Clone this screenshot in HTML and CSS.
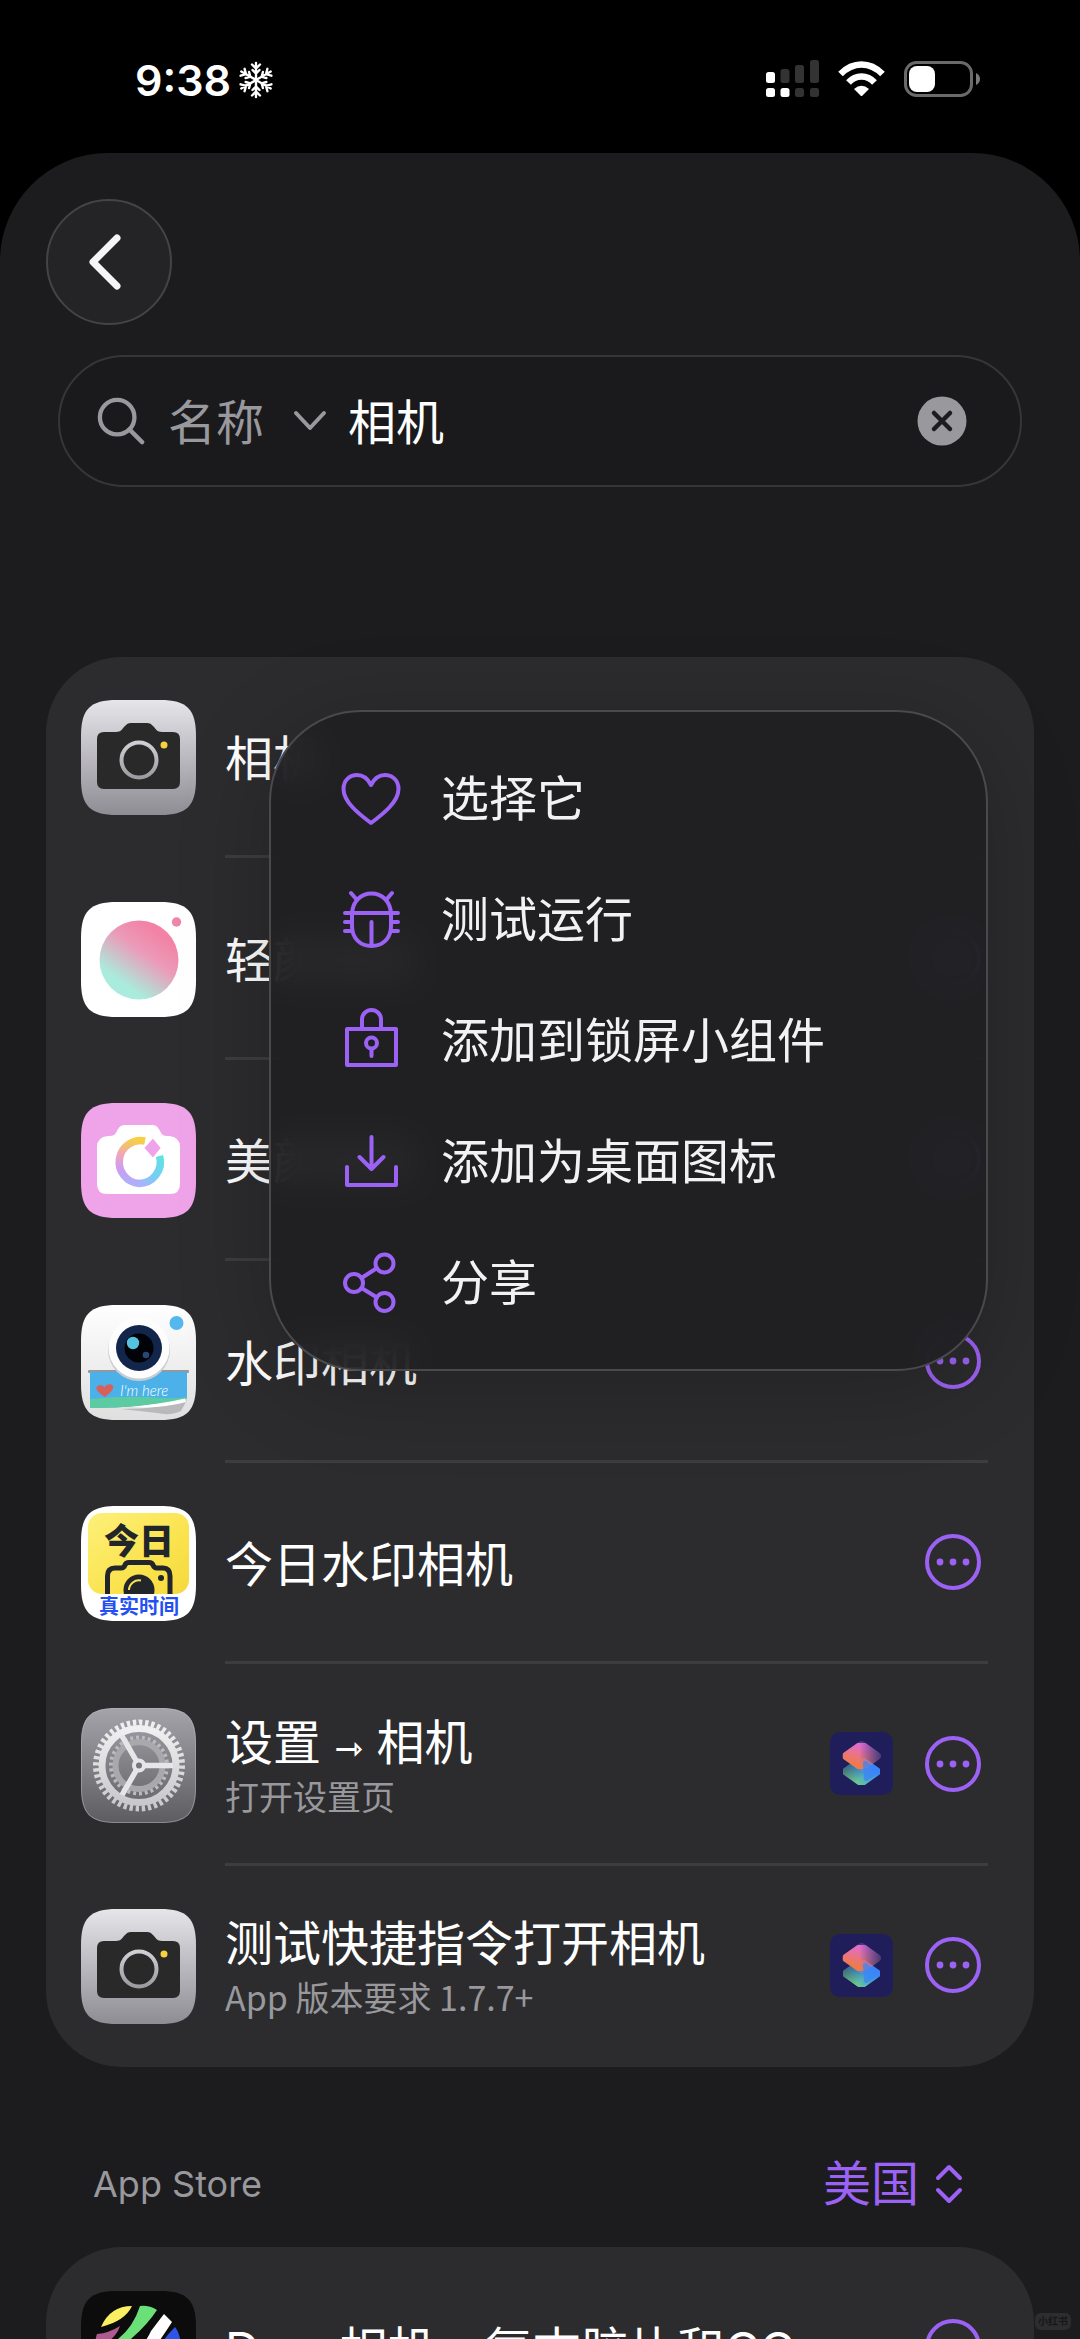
FILE: index.html
```html
<!DOCTYPE html>
<html lang="zh-CN">
<head>
<meta charset="utf-8">
<meta name="viewport" content="width=device-width, initial-scale=1">
<title>相机</title>
<link rel="stylesheet" href="styles.css">
</head>
<body>
<svg class="defs" aria-hidden="true">
  <defs>
    <linearGradient id="g-silver" x1="0" y1="0" x2="0" y2="1"><stop offset="0" stop-color="#e6e5ea"/><stop offset="1" stop-color="#8f8d94"/></linearGradient>
    <linearGradient id="g-ring" x1="0" y1="0" x2="0" y2="1"><stop offset="0" stop-color="#d0cfd3"/><stop offset="1" stop-color="#9c9ba0"/></linearGradient>
    <linearGradient id="g-pink" x1=".8" y1=".08" x2=".2" y2=".92"><stop offset=".1" stop-color="#f283a6"/><stop offset=".4" stop-color="#eb9bb8"/><stop offset=".85" stop-color="#a9ecdd"/></linearGradient>
    <linearGradient id="g-arc-left" x1=".7" y1="0" x2=".6" y2="1"><stop offset="0" stop-color="#f6cf45"/><stop offset=".4" stop-color="#efa5bd"/><stop offset=".7" stop-color="#cf9cf0"/><stop offset="1" stop-color="#aeb0fa"/></linearGradient>
    <linearGradient id="g-arc-right" x1="1" y1="0" x2="0" y2="1"><stop offset="0" stop-color="#5fe2e4"/><stop offset=".5" stop-color="#78cdf6"/><stop offset="1" stop-color="#aeb0fa"/></linearGradient>
    <linearGradient id="g-white" x1="0" y1="0" x2="0" y2="1"><stop offset="0" stop-color="#fff"/><stop offset="1" stop-color="#dfdfe0"/></linearGradient>
    <linearGradient id="g-yellow" x1="0" y1="0" x2="1" y2="1"><stop offset="0" stop-color="#fdf07a"/><stop offset=".6" stop-color="#fbe34e"/><stop offset="1" stop-color="#f5d83c"/></linearGradient>
    <linearGradient id="g-gray" x1="0" y1="0" x2="0" y2="1"><stop offset="0" stop-color="#a5a4aa"/><stop offset="1" stop-color="#5d5c61"/></linearGradient>
    <linearGradient id="g-gear" x1="0" y1="0" x2="0" y2="1"><stop offset="0" stop-color="#f0f0f2"/><stop offset="1" stop-color="#c9c8cc"/></linearGradient>
    <linearGradient id="g-warm" x1=".6" y1="0" x2=".2" y2=".9"><stop offset="0" stop-color="#e06cd6"/><stop offset=".9" stop-color="#f07a4e"/></linearGradient>
    <linearGradient id="g-warm-fade" x1="0" y1="0" x2="1" y2="0"><stop offset=".45" stop-color="#fff"/><stop offset=".95" stop-color="#000"/></linearGradient>
    <linearGradient id="g-cool" x1="1" y1=".4" x2=".3" y2="1"><stop offset="0" stop-color="#3a84fb"/><stop offset=".5" stop-color="#4aa3cf"/><stop offset="1" stop-color="#6ccb8d"/></linearGradient>
    <linearGradient id="g-cool-fade" x1="0" y1="0" x2=".6" y2=".5"><stop offset="0" stop-color="#222"/><stop offset="1" stop-color="#fff"/></linearGradient>
    <mask id="m-warm"><rect x="10" y="4" width="43" height="40" fill="url(#g-warm-fade)"/></mask>
    <mask id="m-cool"><rect x="10" y="20" width="43" height="40" fill="url(#g-cool-fade)"/></mask>
    <clipPath id="c-app"><path d="M0 36C0 9 9 0 36 0H79C106 0 115 9 115 36V79C115 106 106 115 79 115H36C9 115 0 106 0 79Z"/></clipPath>
    <clipPath id="c-today"><rect x="7" y="7" width="101" height="81" rx="14"/></clipPath>
  </defs>

  <symbol id="app-camera" viewBox="0 0 115 115">
    <g clip-path="url(#c-app)">
      <rect width="115" height="115" fill="url(#g-silver)"/>
      <path fill="#29292a" d="M23 32H35C40 32 41 29 44 26C46 24 47 23 50 23H66C69 23 70 24 72 26C75 29 76 32 81 32H92Q99 32 99 39V82Q99 89 92 89H23Q16 89 16 82V39Q16 32 23 32Z"/>
      <circle cx="58" cy="60" r="17.5" fill="none" stroke="url(#g-ring)" stroke-width="4"/>
      <circle cx="83" cy="45" r="3.5" fill="#f6d23e"/>
    </g>
  </symbol>
  <symbol id="shortcut" viewBox="0 0 63 63">
    <rect width="63" height="63" rx="10" fill="#1f1d5a"/>
    <g stroke-linejoin="round">
      <g mask="url(#m-cool)"><path d="M31.500 28.500L47 39.500L31.500 50.500L16 39.500Z" fill="url(#g-cool)" stroke="url(#g-cool)" stroke-width="8"/></g>
      <path d="M31.500 13L47 24L31.500 35L16 24Z" fill="#b08ac0" stroke="#b08ac0" stroke-width="8" opacity=".28"/>
      <g mask="url(#m-warm)"><path d="M31.500 13L47 24L31.500 35L16 24Z" fill="url(#g-warm)" stroke="url(#g-warm)" stroke-width="8"/></g>
      <path d="M35 31L47 39.500L36 47Z" fill="#3a84fb" stroke="#3a84fb" stroke-width="4" opacity=".7"/>
    </g>
  </symbol>
  <symbol id="more" viewBox="0 0 56 56">
    <circle cx="28" cy="28" r="26" fill="none" stroke="currentColor" stroke-width="4"/>
    <g fill="currentColor"><circle cx="15" cy="28" r="3.400"/><circle cx="28" cy="28" r="3.400"/><circle cx="41" cy="28" r="3.400"/></g>
  </symbol>
</svg>

<header class="status">
  <div class="clock">
    <span>9:38</span>
    <svg width="34" height="38" viewBox="0 0 34 38" fill="none" stroke="#fff" stroke-width="2.400" stroke-linecap="round">
      <g id="arm"><path d="M17 19V2M13 3.500L17 7.500L21 3.500M13.500 9L17 12.500L20.500 9"/></g>
      <use href="#arm" transform="rotate(60 17 19)"/><use href="#arm" transform="rotate(120 17 19)"/><use href="#arm" transform="rotate(180 17 19)"/><use href="#arm" transform="rotate(240 17 19)"/><use href="#arm" transform="rotate(300 17 19)"/>
    </svg>
  </div>
  <div class="indicators">
    <svg width="53" height="37" viewBox="0 0 53 37" fill="#333">
      <rect x="0" y="12" width="9" height="11" rx="2.500" fill="#fff"/><rect x="14.500" y="9" width="9" height="14" rx="2.500"/><rect x="29" y="5" width="9" height="18" rx="2.500"/><rect x="44" y="0" width="9" height="23" rx="2.500"/>
      <rect x="0" y="28" width="9" height="9" rx="2.500" fill="#fff"/><rect x="14.500" y="28" width="9" height="9" rx="2.500" fill="#fff"/><rect x="29" y="28" width="9" height="9" rx="2.500"/><rect x="44" y="28" width="9" height="9" rx="2.500"/>
    </svg>
    <svg width="47" height="35" viewBox="0 0 47 35" fill="none" stroke="#fff" stroke-width="6.500">
      <path d="M2.500 13Q12 3.500 23.500 3.500Q35 3.500 44.500 13"/>
      <path d="M10.500 21.500Q16 15.500 23.500 15.500Q31 15.500 36.500 21.500"/>
      <path fill="#fff" stroke="none" d="M16 28Q23.500 21.500 31 28L23.500 35.500Z"/>
    </svg>
    <svg width="76" height="36" viewBox="0 0 76 36">
      <rect x="1.500" y="1.500" width="66" height="33" rx="11" fill="none" stroke="#6a6a6c" stroke-width="3"/>
      <rect x="5" y="5" width="26" height="26" rx="8" fill="#fff"/>
      <path d="M72 12Q76 14 76 18Q76 22 72 24Z" fill="#7a7a7c"/>
    </svg>
  </div>
</header>

<main class="sheet">
  <button class="back" type="button" aria-label="返回">
    <svg width="34" height="56" viewBox="0 0 34 56" fill="none" stroke="#f5f5f7" stroke-width="7" stroke-linecap="round" stroke-linejoin="round"><path d="M29 4L5 28L29 52"/></svg>
  </button>

  <form class="search">
    <svg width="48" height="48" viewBox="0 0 50 50" fill="none" stroke="currentColor" stroke-width="4.500" stroke-linecap="round"><circle cx="21" cy="21" r="18"/><path d="M34 34L47 47"/></svg>
    <label class="field">
      <select aria-label="搜索方式"><option>名称</option></select>
      <svg width="34" height="22" viewBox="0 0 34 22" fill="none" stroke="currentColor" stroke-width="4" stroke-linecap="round" stroke-linejoin="round"><path d="M3 3L17 18L31 3"/></svg>
    </label>
    <input type="text" value="相机" aria-label="搜索">
    <button class="clear" type="button" aria-label="清除">
      <svg width="50" height="50" viewBox="0 0 50 50"><circle cx="25" cy="25" r="24.500" fill="#98989d"/><path d="M17 17L33 33M33 17L17 33" stroke="#1c1c1e" stroke-width="4.500" stroke-linecap="round"/></svg>
    </button>
  </form>

  <section class="results">
    <ul class="card">
      <li class="row">
        <svg class="app"><use href="#app-camera"/></svg>
        <div class="line"><div class="names"><span class="title">相机</span></div></div>
      </li>
      <li class="row">
        <svg class="app" viewBox="0 0 115 115">
          <g clip-path="url(#c-app)">
            <rect width="115" height="115" fill="#fff"/>
            <circle cx="58" cy="58" r="39.5" fill="url(#g-pink)"/>
            <circle cx="95.500" cy="20" r="4.700" fill="#ef86a9"/>
          </g>
        </svg>
        <div class="line"><div class="names"><span class="title">轻颜相机</span></div>
          <button class="more" type="button" aria-label="更多"><svg><use href="#more"/></svg></button></div>
      </li>
      <li class="row">
        <svg class="app" viewBox="0 0 115 115">
          <g clip-path="url(#c-app)">
            <rect width="115" height="115" fill="#efa3e8"/>
            <path fill="#fff" d="M27 33C33 33 34 32 36 28C38 24 40 22 44 22H71C75 22 77 24 79 28C81 32 82 33 88 33Q99 34 99 44V81Q99 91 89 91H26Q16 91 16 81V44Q16 34 27 33Z"/>
            <path fill="none" stroke="url(#g-arc-left)" stroke-width="7.500" d="M64 38A21.500 21.500 0 1 0 58 80.500"/>
            <path fill="none" stroke="url(#g-arc-right)" stroke-width="7.500" d="M57.500 80.500A21.500 21.500 0 0 0 78.500 53"/>
            <path fill="#efa3e8" stroke="#fff" stroke-width="2" d="M72 34L81 45L72 56L62 45Z"/>
          </g>
        </svg>
        <div class="line"><div class="names"><span class="title">美颜相机</span></div>
          <button class="more" type="button" aria-label="更多"><svg><use href="#more"/></svg></button></div>
      </li>
      <li class="row">
        <svg class="app" viewBox="0 0 115 115">
          <g clip-path="url(#c-app)">
            <rect width="115" height="115" fill="url(#g-white)"/>
            <circle cx="95.500" cy="18" r="7" fill="#54b7ee"/>
            <path d="M40 104Q80 104 106 95L100 106Q90 111 76 108Z" fill="#b9b9bb"/>
            <rect x="7" y="65" width="101" height="3" rx="1" fill="#8f9aa5"/>
            <path fill="#4bb1e8" d="M9 67H106V94Q60 103 9 103Z"/>
            <path fill="#5ccba2" d="M9 94Q50 90 80 93Q95 94 106 92V94Q60 103 9 103Z"/>
            <path fill="#fff" d="M50 102Q80 99 104 93.500L105 97Q80 104 50 102Z"/>
            <circle cx="58" cy="45" r="31" fill="#c8ccd2"/>
            <circle cx="58" cy="43" r="30.500" fill="#fdfdfe"/>
            <circle cx="58" cy="43" r="23" fill="#12254b"/>
            <circle cx="58" cy="43" r="14.500" fill="#020308"/>
            <circle cx="52" cy="38" r="6.200" fill="#53c3e0"/>
            <circle cx="65" cy="50" r="3.300" fill="#2a4677"/>
            <path fill="#d8605a" d="M24 92C18 88 14 85 16 81.500C18 79 22 79.500 23.500 82.500C25 79.500 30 78 32 81C33.500 84 29 88 24 92Z"/>
            <text x="39" y="91" class="badge-script">I'm here</text>
          </g>
        </svg>
        <div class="line"><div class="names"><span class="title">水印相机</span></div>
          <button class="more" type="button" aria-label="更多"><svg><use href="#more"/></svg></button></div>
      </li>
      <li class="row">
        <svg class="app" viewBox="0 0 115 115">
          <g clip-path="url(#c-app)">
            <rect width="115" height="115" fill="#fff"/>
            <g clip-path="url(#c-today)">
              <rect x="7" y="7" width="101" height="81" fill="url(#g-yellow)"/>
              <path fill="none" stroke="#22262a" stroke-width="5" stroke-linejoin="round" d="M26.500 92V70Q26.500 62 34 62H40Q43 62 44 59Q45 56.500 48 56.500H68Q71 56.500 72 59Q73 62 76 62H82Q89 62 89 70V92"/>
              <circle cx="58" cy="84" r="15.500" fill="#22262a"/>
              <path fill="none" stroke="#fbe34e" stroke-width="2" d="M48 84A10 10 0 0 1 60 74.500"/>
              <circle cx="80" cy="72" r="3" fill="#22262a"/>
            </g>
            <text x="58" y="48" class="badge-today">今日</text>
            <text x="58" y="108" class="badge-real">真实时间</text>
          </g>
        </svg>
        <div class="line"><div class="names"><span class="title">今日水印相机</span></div>
          <button class="more" type="button" aria-label="更多"><svg><use href="#more"/></svg></button></div>
      </li>
      <li class="row">
        <svg class="app" viewBox="0 0 115 115">
          <g clip-path="url(#c-app)">
            <rect width="115" height="115" fill="url(#g-gray)"/>
            <g fill="none">
              <circle cx="58" cy="57.500" r="28" stroke="#bcbbc0" stroke-width="4" pathLength="60" stroke-dasharray="1 1"/>
              <circle cx="58" cy="57.500" r="23.500" stroke="#a9a8ad" stroke-width="6"/>
              <circle cx="58" cy="57.500" r="43" stroke="url(#g-gear)" stroke-width="6" pathLength="88" stroke-dasharray="1.100 .900"/>
              <circle cx="58" cy="57.500" r="37" stroke="url(#g-gear)" stroke-width="7"/>
              <path stroke="#e6e6e8" stroke-width="5.500" d="M62 57.500H92M56 54L41 28M56 61L41 87"/>
              <circle cx="58" cy="57.500" r="5" fill="#77767b" stroke="#e6e6e8" stroke-width="4"/>
            </g>
            <path fill="none" stroke="#b8b8bd" stroke-opacity=".5" stroke-width="2" d="M0 36C0 9 9 0 36 0H79C106 0 115 9 115 36V79C115 106 106 115 79 115H36C9 115 0 106 0 79Z"/>
          </g>
        </svg>
        <div class="line"><div class="names"><span class="title">设置 <span class="arrow">⇾</span> 相机</span><span class="sub">打开设置页</span></div>
          <svg class="shortcut"><use href="#shortcut"/></svg>
          <button class="more" type="button" aria-label="更多"><svg><use href="#more"/></svg></button></div>
      </li>
      <li class="row">
        <svg class="app"><use href="#app-camera"/></svg>
        <div class="line"><div class="names"><span class="title">测试快捷指令打开相机</span><span class="sub">App 版本要求 1.7.7+</span></div>
          <svg class="shortcut"><use href="#shortcut"/></svg>
          <button class="more" type="button" aria-label="更多"><svg><use href="#more"/></svg></button></div>
      </li>
    </ul>

    <div class="menu" role="menu">
      <button type="button" role="menuitem">
        <svg viewBox="0 0 60 60"><path d="M30 54C18 45 2.500 33 2.500 20C2.500 11 9 6 16 6C22.500 6 27 10 30 16C33 10 37.500 6 44 6C51 6 57.500 11 57.500 20C57.500 33 42 45 30 54Z"/></svg>
        <span>选择它</span>
      </button>
      <button type="button" role="menuitem">
        <svg viewBox="0 0 60 60"><path d="M11 23C12 11 20 3.500 30.500 3.500S49 11 50 23V36C50 49 41 56 30.500 56S11 49 11 36ZM4 23H57M30.500 32V56M4 32H11M4 41H11M50 32H57M50 41H57M10 3L16 10M51 3L45 10"/></svg>
        <span>测试运行</span>
      </button>
      <button type="button" role="menuitem">
        <svg viewBox="0 0 60 60"><path d="M21 18V8.500A9.500 9.500 0 0 1 40 8.500V18M6 18H55V54H6ZM30.500 38V45"/><circle cx="30.500" cy="32" r="5.500"/></svg>
        <span>添加到锁屏小组件</span>
      </button>
      <button type="button" role="menuitem">
        <svg viewBox="0 0 60 60"><path d="M30.500 5V37M18.500 25L30.500 37L42.500 25M6 35V53H55V35"/></svg>
        <span>添加为桌面图标</span>
      </button>
      <button type="button" role="menuitem">
        <svg viewBox="0 0 60 60"><circle cx="13" cy="30" r="9"/><circle cx="43.500" cy="10.500" r="9"/><circle cx="43.500" cy="49" r="9"/><path d="M20.500 25L36 15M20.500 35L36 44.500"/></svg>
        <span>分享</span>
      </button>
    </div>
  </section>

  <div class="store">
    <h2>App Store</h2>
    <label class="region">
      <select aria-label="地区"><option>美国</option></select>
      <svg width="28" height="40" viewBox="0 0 28 40" fill="none" stroke="currentColor" stroke-width="4" stroke-linecap="round" stroke-linejoin="round"><path d="M3 14L14 3L25 14M3 26L14 37L25 26"/></svg>
    </label>
  </div>

  <ul class="card">
    <li class="row">
      <svg class="app" viewBox="0 0 115 115">
        <g clip-path="url(#c-app)">
          <rect width="115" height="115" fill="#0c0c0c"/>
          <path fill="#fbf062" d="M20 36Q29 15 51 15Q44 30 20 36Z"/>
          <path fill="#6bdf78" d="M59 15Q68 14 76 19Q66 34 52 46Q40 58 28 62L26 55Q50 43 59 15Z"/>
          <path fill="#fff" d="M83 23L91 31Q84 42 74 56Q62 72 44 84L38 76Q62 58 70 40Q76 32 83 23Z"/>
          <path fill="#2f55e8" d="M94 36Q99 42 100 54Q92 80 70 96Q78 66 82 50Q88 42 94 36Z"/>
          <path fill="#ad5a8f" d="M39 35Q36 44 28 50Q22 54 14 58Q14 48 16 43Q28 42 39 35Z"/>
        </g>
      </svg>
      <div class="line"><div class="names"><span class="title">Dazz相机 - 复古胶片和CC…</span></div>
        <button class="more" type="button" aria-label="更多"><svg><use href="#more"/></svg></button></div>
    </li>
  </ul>
</main>
<span class="watermark">小红书</span>
</body>
</html>
```
FILE: styles.css
```css
:root {
  --purple: #9c62f5;
  --gray: #98989d;
  --text: #fff;
  --card: #2c2c2e;
  --sheet: #1c1c1e;
}

* { box-sizing: border-box; }

body {
  margin: 0;
  height: 100vh;
  overflow: hidden;
  position: relative;
  display: flex;
  flex-direction: column;
  background: #000;
  color: var(--text);
  font-family: Inter, "Noto Sans CJK SC", sans-serif;
  font-size: 48px;
  line-height: 64px;
}

button, select, input {
  appearance: none;
  margin: 0;
  padding: 0;
  border: 0;
  border-radius: 0;
  background: none;
  color: inherit;
  font: inherit;
}

ul { margin: 0; padding: 0; list-style: none; }
svg { display: block; flex: none; }
.defs { position: absolute; width: 0; height: 0; }

.status {
  flex: none;
  display: flex;
  justify-content: space-between;
  align-items: flex-start;
  padding: 60px 100px 0 135px;
  height: 153px;
}
.clock {
  display: flex;
  align-items: center;
  gap: 8px;
  height: 40px;
  font-size: 43px;
  font-weight: 600;
}
.indicators { display: flex; align-items: center; gap: 19px; }

.sheet {
  flex: none;
  padding: 46px 46px 0;
  border-radius: 108px 108px 0 0;
  background: var(--sheet);
}

.back {
  display: flex;
  align-items: center;
  justify-content: center;
  width: 126px;
  height: 126px;
  padding-right: 8px;
  border: 2px solid #444446;
  border-radius: 50%;
  background: #242426;
}

.search {
  display: flex;
  align-items: center;
  margin: 30px 12px 170px;
  height: 132px;
  padding: 0 53px 0 37px;
  border: 2px solid #363638;
  border-radius: 66px;
  background: #1a1a1c;
  color: var(--gray);
}
.field {
  display: flex;
  align-items: center;
  gap: 27px;
  margin: 0 21px 0 23px;
}
.field select { width: 98px; padding-top: 4px; }
.search input {
  flex: 1;
  min-width: 0;
  padding-top: 4px;
  color: var(--text);
  outline: 0;
}

.results { position: relative; }

.card {
  border-radius: 76px;
  background: var(--card);
  padding: 0 46px 0 35px;
}
.row {
  display: flex;
  align-items: center;
  gap: 29px;
  height: 202px;
}
.results .row { height: 201px; }
.results .row:nth-child(2n) { height: 202px; }
.app { width: 115px; height: 115px; }
.line {
  flex: 1;
  min-width: 0;
  align-self: stretch;
  display: flex;
  align-items: center;
  gap: 32px;
  padding-right: 7px;
  border-bottom: 3px solid #3d3d40;
}
.row:last-child .line { border-bottom-color: transparent; }
.names {
  flex: 1;
  min-width: 0;
  display: flex;
  flex-direction: column;
  padding-top: 6px;
}
.title { white-space: nowrap; line-height: 58px; }
.arrow {
  font-family: "DejaVu Sans", sans-serif;
  font-size: 34px;
  font-weight: 700;
  line-height: 1;
}
.sub {
  color: var(--gray);
  font-family: "Noto Sans CJK SC", sans-serif;
  font-size: 34px;
  line-height: 48px;
}
.shortcut { width: 63px; height: 63px; }
.more { color: var(--purple); }
.more svg { width: 56px; height: 56px; }

.menu {
  position: absolute;
  top: 53px;
  left: 223px;
  right: 46px;
  display: flex;
  flex-direction: column;
  padding: 26px 0;
  border: 2px solid #4a4a4c;
  border-radius: 92px;
  background: rgba(31, 31, 33, .9);
  backdrop-filter: blur(18px);
  box-shadow: 0 16px 90px rgba(0, 0, 0, .22);
}
.menu button {
  display: flex;
  align-items: center;
  gap: 40px;
  height: 121px;
  padding: 0 70px;
  color: #f2f2f4;
  text-align: left;
}
.menu svg {
  width: 60px;
  height: 60px;
  overflow: visible;
  fill: none;
  stroke: var(--purple);
  stroke-width: 4;
  stroke-linecap: round;
  stroke-linejoin: round;
}

.store {
  display: flex;
  justify-content: space-between;
  align-items: center;
  height: 180px;
  padding: 54px 71px 0 47px;
}
.store h2 { margin: 0; color: var(--gray); font-size: 36px; font-weight: 400; }
.region { display: flex; align-items: center; gap: 14px; color: var(--purple); }
.region select { width: 98px; }

.badge-script { fill: #fff; font: italic 300 15px Lato, sans-serif; }
.badge-today { fill: #22262a; font: 900 35px "Noto Sans CJK SC", sans-serif; text-anchor: middle; }
.badge-real { fill: #2450f2; font: 700 20px "Noto Sans CJK SC", sans-serif; text-anchor: middle; }

.watermark {
  position: absolute;
  right: 9px;
  bottom: 9px;
  width: 36px;
  border-radius: 6px;
  background: #2d2d2e;
  color: #171718;
  font-size: 10px;
  font-weight: 700;
  line-height: 17px;
  text-align: center;
}
```
